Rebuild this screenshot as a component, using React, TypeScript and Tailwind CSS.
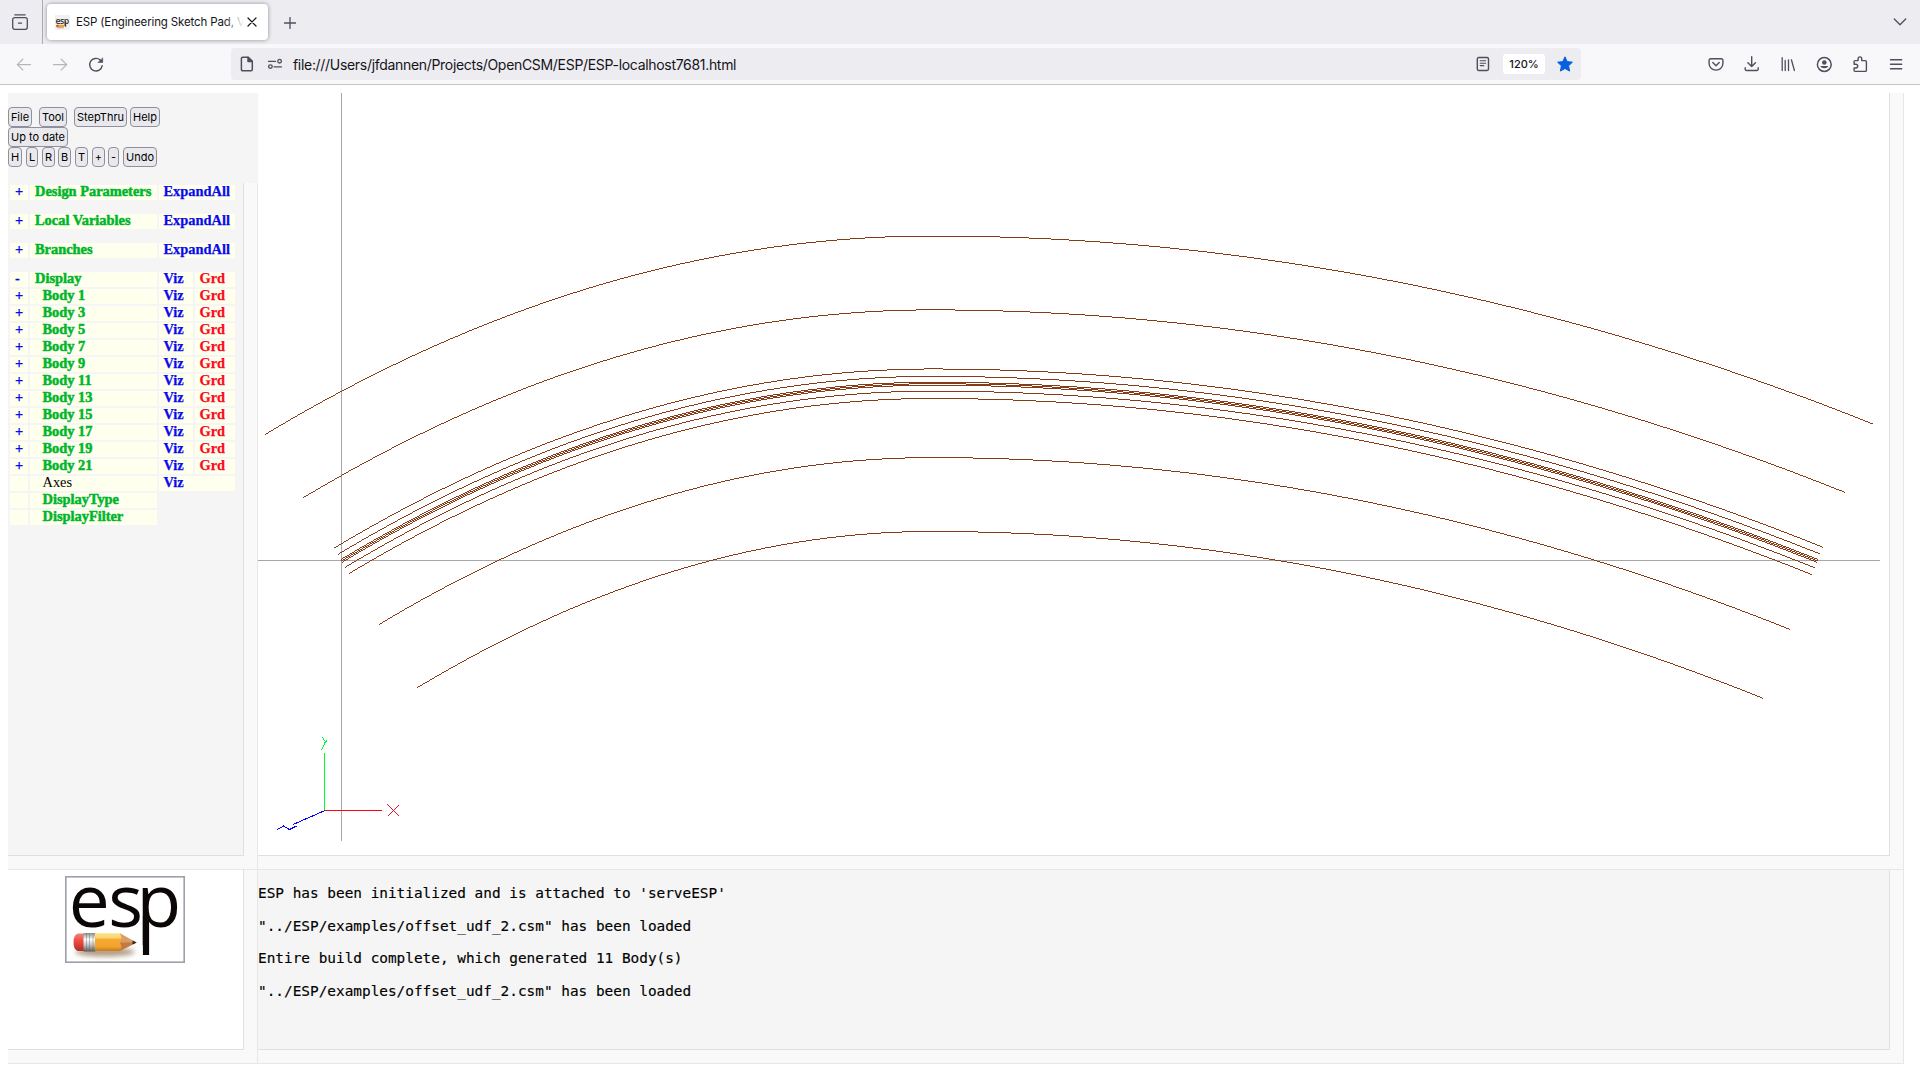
import React from 'react';

const ink = '#4f4e5c';

function Icon({ children, className = '', stroke = ink, width = 1.3 }: { children: React.ReactNode; className?: string; stroke?: string; width?: number }) {
  return (
    <svg className={`block h-4 w-4 shrink-0 overflow-visible ${className}`} viewBox="0 0 16 16" fill="none" stroke={stroke} strokeWidth={width} strokeLinecap="round" strokeLinejoin="round">
      {children}
    </svg>
  );
}

/* ---------- browser chrome ---------- */

function TabStrip() {
  return (
    <div className="flex h-11 items-start bg-[#edecf1]">
      <div className="flex h-11 w-[43px] border-r border-[#acabb2] pl-3 pt-3.5">
        <Icon>
          <path d="M2.8 .8h10.4" />
          <rect x=".7" y="3.7" width="14.6" height="11.6" rx="2" />
          <path d="M6.5 9.2h3" />
        </Icon>
      </div>
      <div className="ml-1 mt-1 flex h-9 w-[221px] items-center rounded bg-white pl-2 shadow-[0_0_4px_rgba(0,0,0,0.4)]">
        <svg className="block h-[15px] w-[15px] shrink-0" viewBox="0 0 120 120">
          <rect width="120" height="120" fill="#f1f1f1" />
          <text x="3" y="68" fontFamily="Open Sans" fontSize="70" fontWeight="600" letterSpacing="-4" fill="#333">esp</text>
          <rect x="80" y="50" width="9" height="44" fill="#333" />
          <rect x="14" y="78" width="60" height="20" rx="8" fill="#f0a030" />
          <rect x="10" y="78" width="18" height="20" rx="6" fill="#d9503a" />
          <rect x="20" y="98" width="50" height="8" fill="#b9a48c" />
        </svg>
        <div className="relative ml-1.5 h-5 w-[168px] overflow-hidden whitespace-nowrap font-['Inter'] text-[11.5px] leading-5 tracking-[-0.14px] text-[#15141a]">
          ESP (Engineering Sketch Pad, V1
          <div className="absolute right-0 top-0 h-5 w-5 bg-linear-to-r from-transparent to-white" />
        </div>
        <svg className="ml-[3px] block h-2.5 w-2.5" viewBox="0 0 10 10" stroke="#15141a" strokeWidth="1.2" strokeLinecap="round">
          <path d="M1 1l8 8M9 1l-8 8" />
        </svg>
      </div>
      <svg className="ml-4 mt-[17px] block h-3 w-3" viewBox="0 0 12 12" stroke={ink} strokeWidth="1.3" strokeLinecap="round">
        <path d="M6 .5v11M.5 6h11" />
      </svg>
      <svg className="ml-auto mr-[13px] mt-[18px] block h-2 w-[14px]" viewBox="0 0 14 8" fill="none" stroke={ink} strokeWidth="1.3" strokeLinecap="round" strokeLinejoin="round">
        <path d="M1.3 1l5.7 5.7L12.700 1" />
      </svg>
    </div>
  );
}

function NavBar() {
  return (
    <div className="flex h-[41px] items-center border-b border-[#c3c3c8] bg-[#f8f8fa]">
      <Icon className="ml-4" stroke="#b6b5bc"><path d="M14.500 8.600H1.500M6.800 3.300L1.300 8.600l5.500 5.300" /></Icon>
      <Icon className="ml-5" stroke="#b6b5bc"><path d="M1.500 8.600h13M9.200 3.300l5.500 5.300-5.500 5.300" /></Icon>
      <Icon className="ml-5" width={1.4}>
        <path d="M14.200 9.600a6.300 6.300 0 1 1-2-5.600l1.300 1.300" />
        <path d="M14.700 2.200v4.300h-4.500z" fill={ink} strokeWidth=".6" />
      </Icon>
      <div className="ml-[127px] flex h-8 w-[1350px] items-center rounded bg-[#edecf1] pl-2">
        <Icon width={1.5}>
          <path d="M3.600 1.200h5.600l4.100 4.100v8.200a1.200 1.200 0 0 1-1.200 1.200H3.600a1.200 1.200 0 0 1-1.200-1.200V2.400a1.200 1.200 0 0 1 1.200-1.200z" />
          <path d="M9 1.200v4.300h4.300z" fill={ink} />
        </Icon>
        <Icon className="ml-3" width={1.3}>
          <path d="M1.500 5.400h7M7 10.800h7.500" />
          <circle cx="12.600" cy="5.200" r="1.800" />
          <circle cx="3.400" cy="10.600" r="1.800" />
        </Icon>
        <span className="ml-[10px] mt-px whitespace-nowrap font-['Inter'] text-[14px] tracking-[-0.31px] text-[#15141a]">file:///Users/jfdannen/Projects/OpenCSM/ESP/ESP-localhost7681.html</span>
        <Icon className="ml-auto" width={1.4}>
          <rect x="2.300" y="1.500" width="11.200" height="13" rx="1.400" />
          <path d="M5.200 4.800h5.400M5.200 7.200h5.400M5.200 9.600h3.600" strokeWidth="1.100" />
        </Icon>
        <span className="ml-3 flex h-5 w-[42px] items-center justify-center rounded-[3px] bg-white font-['Inter'] text-[11px] font-medium text-[#15141a]">120%</span>
        <svg className="ml-3 mr-2 block h-4 w-4" viewBox="0 0 16 16" fill="#0560df" stroke="#0560df" strokeWidth="1" strokeLinejoin="round">
          <path d="M8 .8l2.200 4.800 5.200.6-3.800 3.600 1 5.300L8 12.500l-4.600 2.600 1-5.300L.6 6.200l5.200-.6z" />
        </svg>
      </div>
      <div className="ml-auto mr-4 flex gap-5">
        <Icon width={1.4}>
          <path d="M2.600 2.700h10.800a1.500 1.500 0 0 1 1.500 1.500v3.300a6.900 6.600 0 0 1-13.800 0V4.200a1.500 1.500 0 0 1 1.500-1.500z" />
          <path d="M4.800 6.600L8 9.700l3.200-3.100" />
        </Icon>
        <Icon width={1.4}><path d="M7.700 .8v9.600M3.900 6.700l3.800 3.800 3.800-3.800M1.200 11.800v1.400a1.300 1.300 0 0 0 1.300 1.300h10.400a1.300 1.300 0 0 0 1.300-1.300v-1.400" /></Icon>
        <Icon width={1.3}><path d="M2.200 1.700v12.800M5.200 4.400v10.100M8.500 3.800v10.700M11.400 3.800l3 10.700" /></Icon>
        <Icon width={1.5}>
          <circle cx="8.300" cy="8.500" r="6.900" />
          <circle cx="8.300" cy="6.500" r="2.300" fill={ink} stroke="none" />
          <path d="M4.200 10h8.200a4.300 3.300 0 0 1-8.200 0z" fill={ink} stroke="none" />
        </Icon>
        <Icon width={1.4}>
          <path d="M2.100 8V5.600a1 1 0 0 1 1-1h3V2.700a1.800 1.800 0 0 1 3.600 0v1.900h3.700a1 1 0 0 1 1 1v8.800a1 1 0 0 1-1 1H3.100a1 1 0 0 1-1-1V12h1.700a1.900 1.900 0 0 0 0-3.800H2.100z" />
        </Icon>
        <Icon width={1.4}><path d="M2.500 3.800h11.200M2.500 8.300h11.200M2.500 12.700h11.200" /></Icon>
      </div>
    </div>
  );
}

/* ---------- tree panel ---------- */

function Btn({ className, children }: { className: string; children: React.ReactNode }) {
  return (
    <button className={`block h-5 shrink-0 whitespace-nowrap rounded border border-[#8f8f9d] bg-[#e9e9ed] p-0 text-center font-['Inter'] text-[11px] leading-[18px] text-black ${className}`}>
      {children}
    </button>
  );
}

function Toolbar() {
  return (
    <div className="h-[90px] bg-[#f5f5f5] pt-3.5">
      <div className="flex">
        <Btn className="w-6">File</Btn>
        <Btn className="ml-[7px] w-7">Tool</Btn>
        <Btn className="ml-[7px] w-[53px]">StepThru</Btn>
        <Btn className="ml-[3px] w-[30px]">Help</Btn>
      </div>
      <div className="flex"><Btn className="w-[60px]">Up to date</Btn></div>
      <div className="flex">
        <Btn className="w-3.5">H</Btn>
        <Btn className="ml-1 w-3">L</Btn>
        <Btn className="ml-1 w-[13px]">R</Btn>
        <Btn className="ml-[3px] w-[13px]">B</Btn>
        <Btn className="ml-1 w-[13px]">T</Btn>
        <Btn className="ml-1 w-[13px]">+</Btn>
        <Btn className="ml-[3px] w-[11px]">-</Btn>
        <Btn className="ml-1 w-[34px]">Undo</Btn>
      </div>
    </div>
  );
}

type Row = { sign?: string; label: string; kind: 'section' | 'body' | 'plain' | 'option'; actions: 'expand' | 'both' | 'viz' | 'none'; gap?: boolean };

const rows: Row[] = [
  { sign: '+', label: 'Design Parameters', kind: 'section', actions: 'expand', gap: true },
  { sign: '+', label: 'Local Variables', kind: 'section', actions: 'expand', gap: true },
  { sign: '+', label: 'Branches', kind: 'section', actions: 'expand', gap: true },
  { sign: '-', label: 'Display', kind: 'section', actions: 'both' },
  ...[1, 3, 5, 7, 9, 11, 13, 15, 17, 19, 21].map((n): Row => ({ sign: '+', label: `Body ${n}`, kind: 'body', actions: 'both' })),
  { label: 'Axes', kind: 'plain', actions: 'viz' },
  { label: 'DisplayType', kind: 'option', actions: 'none' },
  { label: 'DisplayFilter', kind: 'option', actions: 'none' },
];

const labelStyle = {
  section: 'pl-[5px] font-bold text-[#00b52b] [-webkit-text-stroke:0.5px_#00b52b]',
  body: 'pl-[12.500px] font-bold text-[#00b52b] [-webkit-text-stroke:0.5px_#00b52b]',
  option: 'pl-[12.500px] font-bold text-[#00b52b] [-webkit-text-stroke:0.5px_#00b52b]',
  plain: 'pl-[12.500px] text-black',
};

function Action({ className, children }: { className: string; children?: React.ReactNode }) {
  return (
    <div className={`bg-[#ffffee] font-bold [-webkit-text-stroke:0.25px_currentColor] ${className}`}>{children}</div>
  );
}

function Tree() {
  return (
    <div className="flex flex-col gap-0.5 pl-0.5 pt-0.5 font-['Liberation_Serif'] text-[14.4px] leading-[13px]">
      {rows.map((r) => (
        <div key={r.label} className={`flex h-[15px] shrink-0 gap-0.5 whitespace-nowrap ${r.gap ? 'mb-3' : ''}`}>
          <Action className="w-[18px] pl-[5px] text-[#0a0aee]">{r.sign}</Action>
          <div className={`w-[127px] bg-[#ffffee] ${labelStyle[r.kind]}`}>{r.label}</div>
          {r.actions === 'expand' && <Action className="w-[76px] pl-[4.500px] text-[#0a0aee]">ExpandAll</Action>}
          {r.actions === 'viz' && <Action className="w-[76px] pl-[4.500px] text-[#0a0aee]">Viz</Action>}
          {r.actions === 'both' && (
            <>
              <Action className="w-[34px] pl-[4.500px] text-[#0a0aee]">Viz</Action>
              <Action className="w-10 pl-[4.500px] text-[#fb0a1e]">Grd</Action>
            </>
          )}
        </div>
      ))}
    </div>
  );
}

/* ---------- graphics canvas ---------- */

const CHORD_X = 1476.4;
const CHORD_Y = 1477.3;
const X0 = 341.3 - 258;
const Y0 = 561.02 - 93;
const CAMBER = 0.12;
const PEAK = 0.4;

// Traces a four-digit camber line displaced along its normal, one pixel per column.
function offsetCurve(dist: number): string {
  const pts: [number, number][] = [];
  const n = 1500;
  for (let i = 0; i <= n; i++) {
    const t = i / n;
    const k = t < PEAK ? CAMBER / (PEAK * PEAK) : CAMBER / ((1 - PEAK) * (1 - PEAK));
    const y = CAMBER - k * (t - PEAK) * (t - PEAK);
    const s = -2 * k * (t - PEAK);
    const len = Math.hypot(s, 1);
    pts.push([X0 + CHORD_X * (t - (dist * s) / len), Y0 - CHORD_Y * (y + dist / len)]);
  }
  let j = 0;
  let d = '';
  let runStart = 0;
  let runY = -1;
  const first = Math.floor(pts[0][0] + 0.5);
  const last = Math.floor(pts[n][0] - 0.5);
  for (let x = first; x <= last; x++) {
    while (j < n - 1 && pts[j + 1][0] < x + 0.5) j++;
    const [ax, ay] = pts[j];
    const [bx, by] = pts[j + 1];
    const y = Math.floor(ay + ((by - ay) * (x + 0.5 - ax)) / (bx - ax));
    if (y !== runY) {
      if (runY >= 0) d += `M${runStart} ${runY + 0.5}H${x}`;
      runStart = x;
      runY = y;
    }
  }
  return d + `M${runStart} ${runY + 0.5}H${last + 1}`;
}

const curves = [0.1, 0.05, 0.01, 0.005, 0.001, 0, -0.001, -0.005, -0.01, -0.05, -0.1].map(offsetCurve);

function Canvas() {
  return (
    <svg className="block h-[762px] w-[1631px]" viewBox="0 0 1631 762" fill="none" shapeRendering="crispEdges">
      <path d="M83.500 0V748M0 467.500H1622" stroke="#a6a6a6" />
      {curves.map((d, i) => <path key={i} d={d} stroke="#873c18" />)}
      <path d="M66 717.500H124" stroke="#ff0018" />
      <path d="M129.200 711.200l11.500 11.500M140.700 712.200l-10.500 10.500" stroke="#e8102a" />
      <path d="M66.500 660V717" stroke="#00ff30" />
      <path d="M64.500 644.500l3 4.500M69 647.500l-2 2-3.500 8" stroke="#00ff30" />
      <path d="M67 717.500L35 731.500M19.500 736.500l6-3.500 6 3.500 7-3.500" stroke="#0000ff" />
    </svg>
  );
}

/* ---------- lower panels ---------- */

function Logo() {
  return (
    <svg className="ml-[57px] mt-1.5 block h-[87px] w-[120px] overflow-visible" viewBox="0 0 120 87">
      <defs>
        <linearGradient id="wood" x1="0" y1="0" x2="0" y2="1">
          <stop offset="0" stopColor="#ffe08a" /><stop offset=".28" stopColor="#fbd56c" />
          <stop offset=".32" stopColor="#f5ab33" /><stop offset=".75" stopColor="#f3a32c" /><stop offset="1" stopColor="#c67a1c" />
        </linearGradient>
        <linearGradient id="rubber" x1="0" y1="0" x2="0" y2="1">
          <stop offset="0" stopColor="#e88a7c" /><stop offset=".4" stopColor="#f04e42" /><stop offset="1" stopColor="#b42c26" />
        </linearGradient>
        <linearGradient id="metal" x1="0" y1="0" x2="0" y2="1">
          <stop offset="0" stopColor="#8d8d8d" /><stop offset=".35" stopColor="#ffffff" /><stop offset=".65" stopColor="#c2c2c2" /><stop offset="1" stopColor="#5a5a5a" />
        </linearGradient>
        <filter id="soft" x="-20%" y="-100%" width="140%" height="300%"><feGaussianBlur stdDeviation="2.500" /></filter>
      </defs>
      <rect x=".8" y=".8" width="118.400" height="85.400" fill="#fff" stroke="#9ba1a7" strokeWidth="1.600" />
      <text x="3.800 43.200 71.600" y="50.800" fontFamily="Open Sans" fontSize="73" fill="#0b0706">esp</text>
      <rect x="77.900" y="40" width="6.200" height="39" fill="#0b0706" />
      <ellipse cx="40" cy="76" rx="30" ry="4.500" fill="#7d5a35" opacity=".6" filter="url(#soft)" />
      <path d="M13 57.500h7v17.500h-7q-4.500-1-4.500-8.700t4.500-8.800z" fill="url(#rubber)" />
      <rect x="18.500" y="57" width="12" height="18.500" fill="url(#metal)" />
      <path d="M21.500 57v18.500M24.500 57v18.500M28 57v18.500" stroke="#666" strokeWidth=".4" />
      <path d="M30 57.200h26l2 9-2 8.800H30z" fill="url(#wood)" />
      <path d="M55 57.200L71.500 66.500 55 75l1.500-4-1.500-4.500 1.500-4.500z" fill="#dd9c63" />
      <path d="M55 66.500L71.500 66.500 55 75l1.500-4z" fill="#c07a42" />
      <path d="M67.800 64.400l3.900 2.100-3.900 2.100q-.8-2 0-4.200z" fill="#2c2c30" />
    </svg>
  );
}

const messages = [
  "ESP has been initialized and is attached to 'serveESP'",
  '"../ESP/examples/offset_udf_2.csm" has been loaded',
  'Entire build complete, which generated 11 Body(s)',
  '"../ESP/examples/offset_udf_2.csm" has been loaded',
];

export default function App() {
  return (
    <div className="h-[1080px] w-[1920px] overflow-hidden bg-white">
      <TabStrip />
      <NavBar />
      <div className="ml-2 mt-2 grid w-[1896px] grid-cols-[250px_1646px] grid-rows-[777px_194px]">
        <div className="flex flex-col">
          <Toolbar />
          <div className="grow border-b border-r border-[#e7e7e7] bg-[#f9f9f9] pb-[13px] pr-[13px]">
            <div className="h-[673px] border-b border-r border-[#e0e0e0] bg-[#f5f5f5]"><Tree /></div>
          </div>
        </div>
        <div className="border-b border-r border-[#e7e7e7] bg-[#f9f9f9] pb-[13px] pr-[13px]">
          <div className="h-[763px] border-b border-r border-[#e0e0e0] bg-white"><Canvas /></div>
        </div>
        <div className="border-b border-r border-[#e7e7e7] bg-[#f9f9f9] pb-[13px] pr-[13px]">
          <div className="flex h-[180px] border-b border-r border-[#e0e0e0] bg-white"><Logo /></div>
        </div>
        <div className="border-b border-r border-[#e7e7e7] bg-[#f9f9f9] pb-[13px] pr-[13px]">
          <div className="h-[180px] border-b border-r border-[#e0e0e0] bg-[#f5f5f5] pt-[7px] font-['DejaVu_Sans_Mono'] text-[14.4px] leading-[32.600px] text-black [-webkit-text-stroke:0.15px_black]">
            {messages.map((m, i) => <div key={i} className="whitespace-pre">{m}</div>)}
          </div>
        </div>
      </div>
    </div>
  );
}
